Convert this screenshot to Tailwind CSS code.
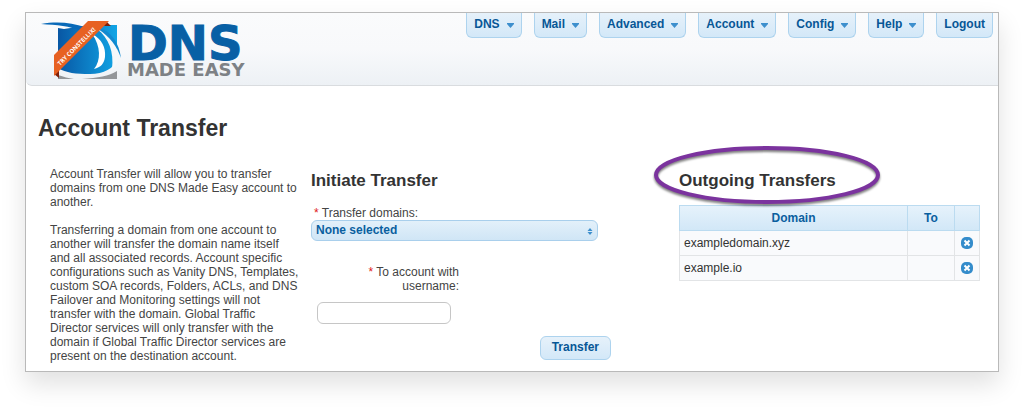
<!DOCTYPE html>
<html lang="en">
<head>
<meta charset="utf-8">
<meta name="viewport" content="width=device-width, initial-scale=1">
<title>Account Transfer</title>
<script src="https://cdn.jsdelivr.net/npm/@tailwindcss/browser@4"></script>
</head>
<body class="bg-white px-[25px] pt-3 pb-[38px] font-['Liberation_Sans',Arial,sans-serif] text-xs leading-[14px] text-[#444]">
<div class="border border-[#b9b9b9] bg-white shadow-[0_12px_24px_rgba(0,0,0,0.12)]">
  <header class="flex h-[73px] items-start justify-between rounded-bl-md border-b border-[#d9dcdf] bg-linear-to-b from-[#fafbfc] via-[#f8f9fb] to-[#edf1f5] pr-[5px]">
    <a href="#" aria-label="DNS Made Easy" class="ml-[14px]">
      <svg width="222" height="72" viewBox="40 13 222 72">
        <defs>
          <linearGradient id="sq" x1="0" y1="0" x2="1" y2="0"><stop offset="0" stop-color="#0857a4"/><stop offset="1" stop-color="#11a5e6"/></linearGradient>
        </defs>
        <path d="M58 28L64 29L90 25H117V60C114 68 104 74 90 74C76 74 66 73 58 68Z" fill="url(#sq)"/>
        <path d="M117 71V79H82C98 78 109 76 117 71ZM58 75C64 77 68 78 74 79H58Z" fill="#939699"/>
        <path d="M92 34C102 39 106 48 105 57C104 64 101 67 94 69C101 61 101 46 92 34Z" fill="#fff"/>
        <path d="M97 28C110 33 117 42 118 55C118 62 116 66 112 69C114 52 109 38 97 29Z" fill="#f6f8fa"/>
        <path d="M98 27C112 32 119 43 121 58C117 46 110 37 98 29Z" fill="#1289d0"/>
        <path d="M41 24C58 21 72 23 85 27L81 31C70 26 57 25 41 24Z" fill="#0869b8"/>
        <path d="M106 21L111 26H104ZM54 74L59 78V70Z" fill="#7e210b"/>
        <path d="M54 55L88 21H109L54 76Z" fill="#e76122"/>
        <text transform="translate(60 66) rotate(-45)" font-family="Open Sans, sans-serif" font-size="6" font-weight="700" fill="#fff">TRY CONSTELLIX!</text>
        <text x="128" y="60" font-family="DejaVu Sans, sans-serif" font-size="48" font-weight="700" fill="#0860a5" stroke="#0860a5">DNS</text>
        <text x="127" y="76" font-family="DejaVu Sans, sans-serif" font-size="18" font-weight="700" fill="#7d8185">MADE EASY</text>
      </svg>
    </a>
    <nav class="flex gap-3 font-bold text-[#075796]">
      <button class="flex h-[25px] items-center gap-[7px] rounded-b-md border border-t-0 border-[#add3ee] bg-linear-to-b from-[#e6f1fa] to-[#d3e8f8] px-[7px] pb-[2px]">DNS<svg width="7" height="5" viewBox="0 0 7 5" class="mt-[2px]"><path d="M0 0H7V1L3.5 5L0 1Z" fill="#3d8fcd"/></svg></button>
      <button class="flex h-[25px] items-center gap-[7px] rounded-b-md border border-t-0 border-[#add3ee] bg-linear-to-b from-[#e6f1fa] to-[#d3e8f8] px-[7px] pb-[2px]">Mail<svg width="7" height="5" viewBox="0 0 7 5" class="mt-[2px]"><path d="M0 0H7V1L3.5 5L0 1Z" fill="#3d8fcd"/></svg></button>
      <button class="flex h-[25px] items-center gap-[7px] rounded-b-md border border-t-0 border-[#add3ee] bg-linear-to-b from-[#e6f1fa] to-[#d3e8f8] px-[7px] pb-[2px]">Advanced<svg width="7" height="5" viewBox="0 0 7 5" class="mt-[2px]"><path d="M0 0H7V1L3.5 5L0 1Z" fill="#3d8fcd"/></svg></button>
      <button class="flex h-[25px] items-center gap-[7px] rounded-b-md border border-t-0 border-[#add3ee] bg-linear-to-b from-[#e6f1fa] to-[#d3e8f8] px-[7px] pb-[2px]">Account<svg width="7" height="5" viewBox="0 0 7 5" class="mt-[2px]"><path d="M0 0H7V1L3.5 5L0 1Z" fill="#3d8fcd"/></svg></button>
      <button class="flex h-[25px] items-center gap-[7px] rounded-b-md border border-t-0 border-[#add3ee] bg-linear-to-b from-[#e6f1fa] to-[#d3e8f8] px-[7px] pb-[2px]">Config<svg width="7" height="5" viewBox="0 0 7 5" class="mt-[2px]"><path d="M0 0H7V1L3.5 5L0 1Z" fill="#3d8fcd"/></svg></button>
      <button class="flex h-[25px] items-center gap-[7px] rounded-b-md border border-t-0 border-[#add3ee] bg-linear-to-b from-[#e6f1fa] to-[#d3e8f8] px-[7px] pb-[2px]">Help<svg width="7" height="5" viewBox="0 0 7 5" class="mt-[2px]"><path d="M0 0H7V1L3.5 5L0 1Z" fill="#3d8fcd"/></svg></button>
      <a href="#" class="flex h-[25px] items-center rounded-b-md border border-t-0 border-[#add3ee] bg-linear-to-b from-[#e6f1fa] to-[#d3e8f8] px-[7px] pb-[2px]">Logout</a>
    </nav>
  </header>
  <main class="pt-7 pr-[18px] pb-2 pl-3">
    <h1 class="text-[23px] leading-7 font-bold text-[#333]">Account Transfer</h1>
    <div class="mt-[25px] flex items-start">
      <div class="ml-3 w-[250px] shrink-0">
        <p>Account Transfer will allow you to transfer<br>domains from one DNS Made Easy account to<br>another.</p>
        <p class="mt-[14px]">Transferring a domain from one account to<br>another will transfer the domain name itself<br>and all associated records. Account specific<br>configurations such as Vanity DNS, Templates,<br>custom SOA records, Folders, ACLs, and DNS<br>Failover and Monitoring settings will not<br>transfer with the domain. Global Traffic<br>Director services will only transfer with the<br>domain if Global Traffic Director services are<br>present on the destination account.</p>
      </div>
      <form class="ml-[11px] w-[300px] shrink-0">
        <h2 class="mt-1 text-[17px] leading-5 font-bold text-[#333]">Initiate Transfer</h2>
        <label for="domains" class="mt-[15px] block pl-[3px]"><span class="text-[#e02020]">*</span> Transfer domains:</label>
        <div class="relative mr-[13px]">
          <select id="domains" class="block h-[21px] w-full appearance-none rounded-md border border-[#a9cfec] bg-linear-to-b from-[#e3f0fa] to-[#d0e6f6] pr-5 pb-[2px] pl-1 font-bold text-[#0a5f9f]"><option>None selected</option></select>
          <svg class="pointer-events-none absolute top-2 right-[5px]" width="6" height="7" viewBox="0 0 6 7"><path d="M0.5 3L3 0L5.5 3ZM0.5 4L3 7L5.5 4Z" fill="#3d8fcd"/></svg>
        </div>
        <label for="username" class="mt-6 block w-[148px] text-right"><span class="text-[#e02020]">*</span> To account with<br>username:</label>
        <input id="username" type="text" class="mt-[9px] ml-[6px] block h-[22px] w-[134px] rounded-md border border-[#c6c6c6] bg-white px-2">
        <div class="mt-3 flex justify-end">
          <button type="button" class="h-[24px] rounded-md border border-[#add3ee] bg-linear-to-b from-[#e6f1fa] to-[#d3e8f8] px-[11px] pb-[2px] font-bold text-[#075796]">Transfer</button>
        </div>
      </form>
      <section class="ml-[68px] flex-1 text-[#333]">
        <h2 class="relative mt-1 text-[17px] leading-5 font-bold">
          <svg class="absolute -top-[26px] -left-[26px] overflow-visible drop-shadow-[0_2px_1px_rgba(0,0,0,0.5)]" width="228" height="60" viewBox="0 0 228 60"><ellipse cx="114" cy="30" rx="111" ry="27" fill="none" stroke="#7b339e" stroke-width="4"/></svg>
          <span>Outgoing Transfers</span>
        </h2>
        <table class="mt-[14px] w-full table-fixed border-collapse">
          <colgroup><col><col class="w-[47px]"><col class="w-[25px]"></colgroup>
          <thead>
            <tr class="h-[25px] bg-linear-to-b from-[#e6f2fb] to-[#d1e7f7] text-[#0a5f9f]">
              <th class="border border-[#bbdbf0]">Domain</th><th class="border border-[#bbdbf0]">To</th><th class="border border-[#bbdbf0]" aria-label="Cancel"></th>
            </tr>
          </thead>
          <tbody>
            <tr class="h-[25px] bg-[#f9fafc]"><td class="border border-[#e2e4e6] px-1">exampledomain.xyz</td><td class="border border-[#e2e4e6]"></td><td class="border border-[#e2e4e6]"><button class="mx-auto block" aria-label="Cancel transfer"><svg width="12" height="12" viewBox="0 0 12 12"><rect width="12" height="12" rx="5" fill="#348ccb"/><path d="M3.5 3.5L8.5 8.5M8.5 3.5L3.5 8.5" stroke="#fff" stroke-width="2"/></svg></button></td></tr>
            <tr class="h-[25px] bg-[#f9fafc]"><td class="border border-[#e2e4e6] px-1">example.io</td><td class="border border-[#e2e4e6]"></td><td class="border border-[#e2e4e6]"><button class="mx-auto block" aria-label="Cancel transfer"><svg width="12" height="12" viewBox="0 0 12 12"><rect width="12" height="12" rx="5" fill="#348ccb"/><path d="M3.5 3.5L8.5 8.5M8.5 3.5L3.5 8.5" stroke="#fff" stroke-width="2"/></svg></button></td></tr>
          </tbody>
        </table>
      </section>
    </div>
  </main>
</div>
</body>
</html>
